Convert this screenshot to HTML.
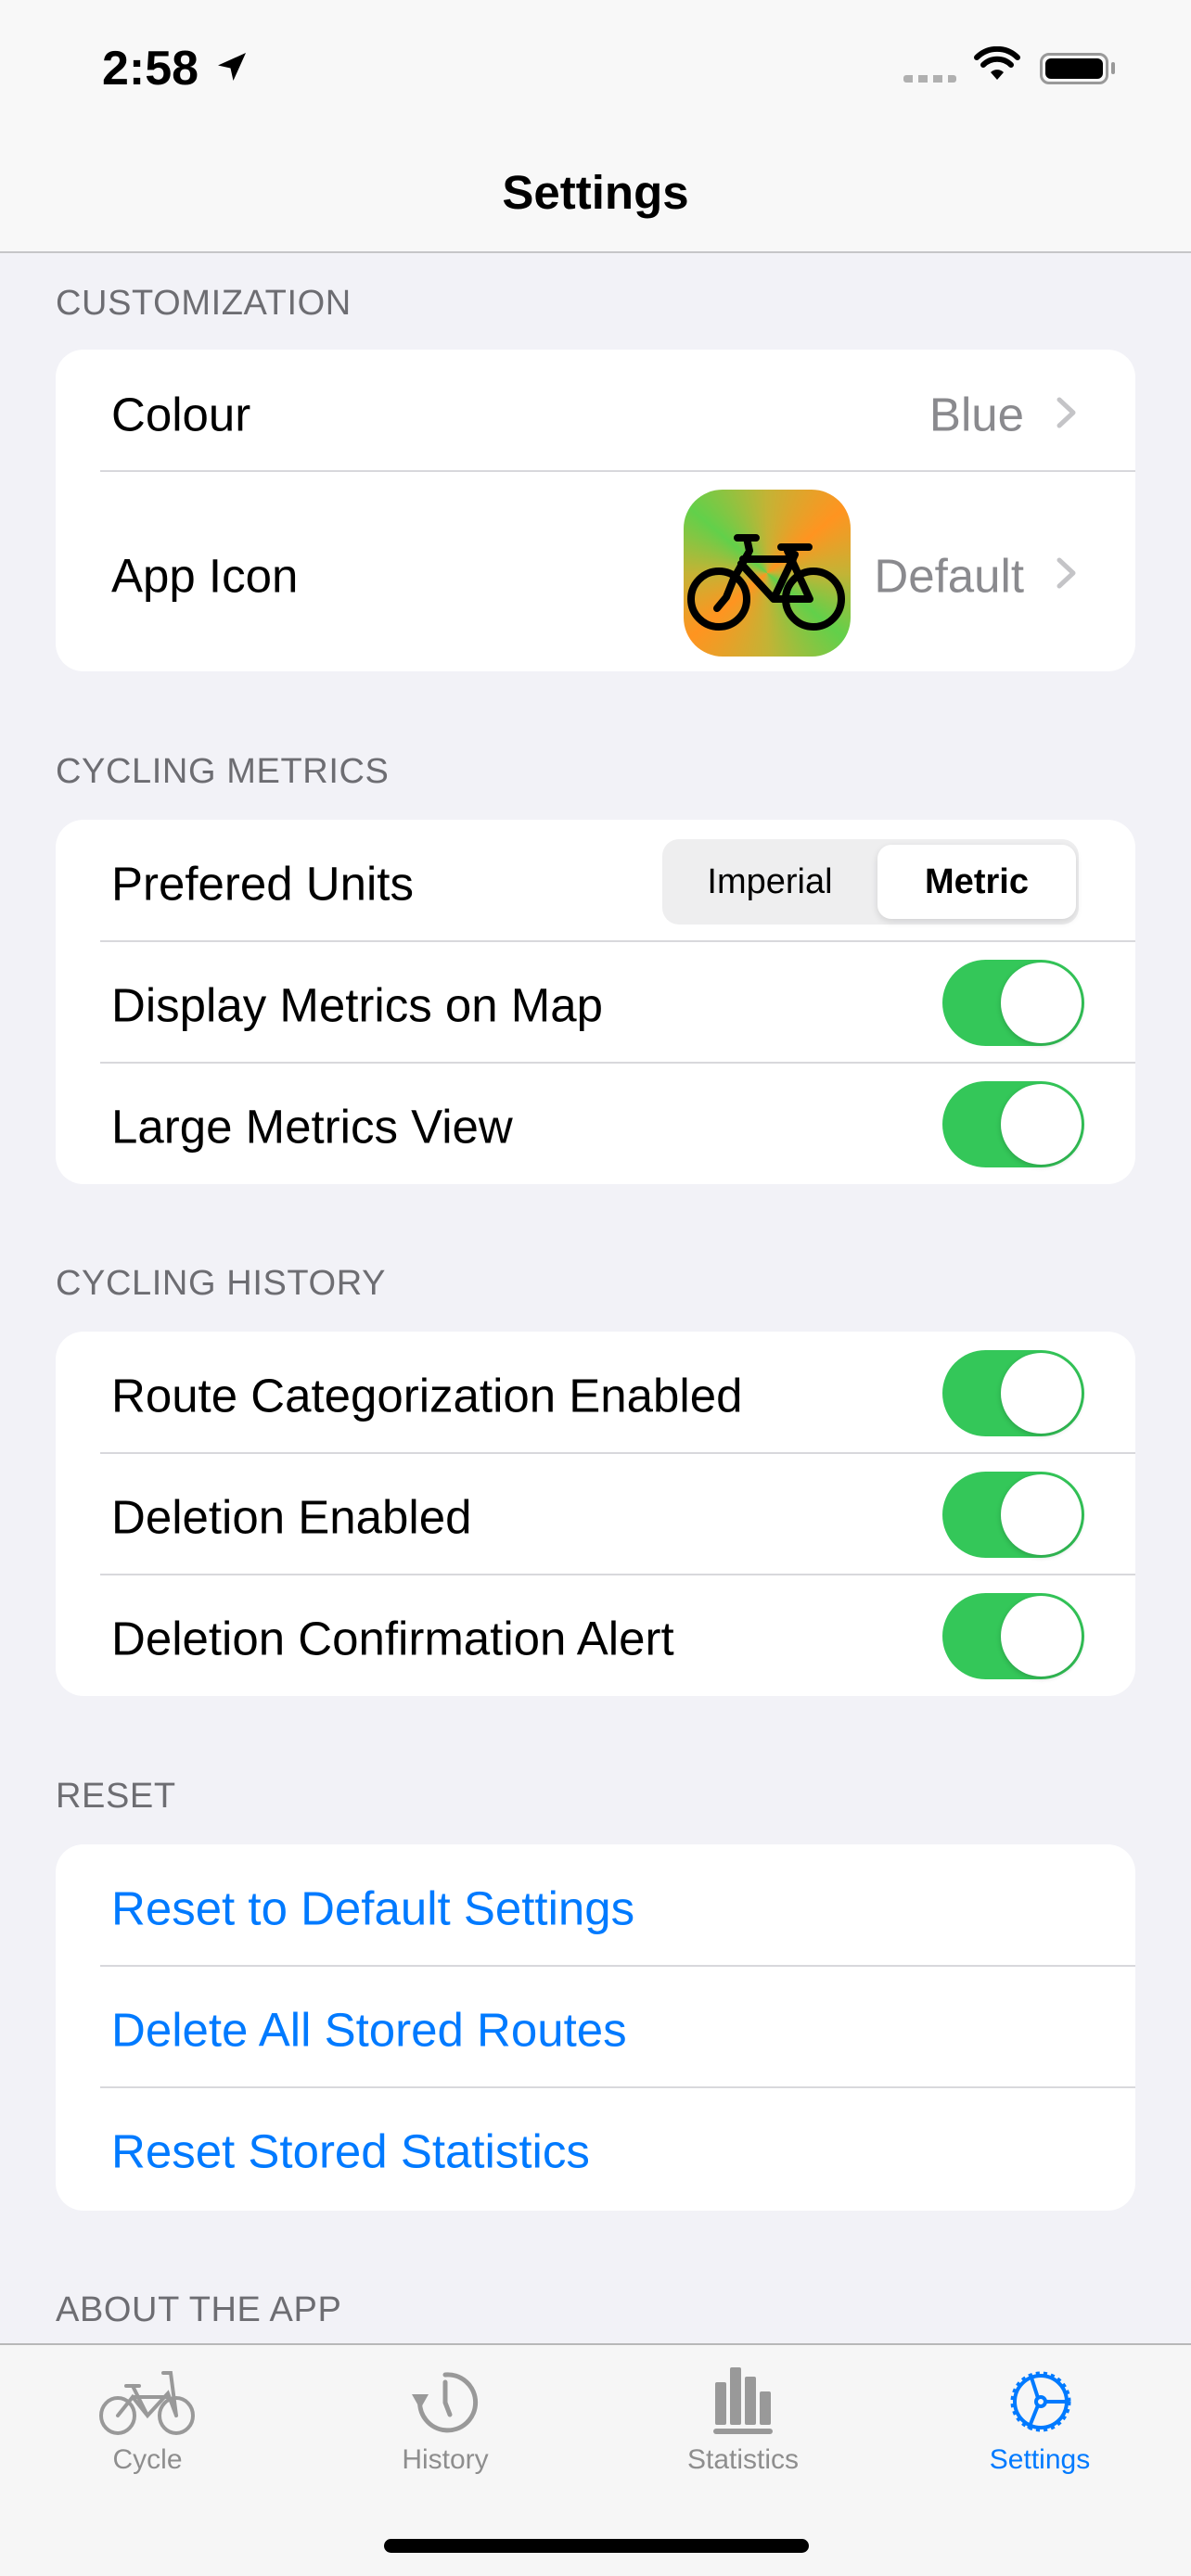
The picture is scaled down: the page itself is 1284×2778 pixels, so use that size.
<!DOCTYPE html>
<html><head><meta charset="utf-8"><style>
*{margin:0;padding:0;box-sizing:border-box}
body{width:1284px;height:2778px;background:#f2f2f7;font-family:"Liberation Sans",sans-serif;position:relative;overflow:hidden;color:#000}
.a{position:absolute}
.nav{left:0;top:0;width:1284px;height:273px;background:#f8f8f8;border-bottom:2px solid #c6c6c8}
.hdr{left:60px;font-size:38px;color:#6d6d72;letter-spacing:0.6px}
.card{left:60px;width:1164px;background:#fff;border-radius:30px}
.lbl{left:60px;font-size:51px;transform:translateY(-50%);margin-top:3px}
.sep{left:48px;right:0;height:2px;background:#d8d8dc}
.tog{width:153px;height:93px;border-radius:47px;background:#34c759;left:956px}
.tog::after{content:"";position:absolute;right:3px;top:3px;width:87px;height:87px;border-radius:50%;background:#fff;box-shadow:0 2px 6px rgba(0,0,0,.2)}
.blue{color:#007aff}
.tl{font-size:30px;color:#8e8e8e;transform:translateX(-50%);top:2636px}
</style></head><body>
<div class="a nav"></div>
<div class="a" style="left:110px;top:44px;font-size:52px;font-weight:bold">2:58</div>
<svg class="a" style="left:232px;top:54px" width="36" height="36" viewBox="0 0 24 24"><path d="M22 2 2 11l9 2 2 9z" fill="#000"/></svg>
<div class="a" style="left:974px;top:81px;width:57px;height:8px;background:repeating-linear-gradient(90deg,#b0b0b0 0 10px,transparent 10px 16px);border-radius:3px"></div>
<svg class="a" style="left:1050px;top:50px" width="50" height="38" viewBox="0 0 50 38"><path d="M25 36 18 28a10 10 0 0 1 14 0z" fill="#000"/><path d="M10 20a21 21 0 0 1 30 0" stroke="#000" stroke-width="6" fill="none" stroke-linecap="round"/><path d="M3 12a31 31 0 0 1 44 0" stroke="#000" stroke-width="6" fill="none" stroke-linecap="round"/></svg>
<div class="a" style="left:1121px;top:57px;width:74px;height:34px;border:3px solid #999;border-radius:10px;padding:3px"><div style="width:100%;height:100%;background:#000;border-radius:6px"></div></div>
<div class="a" style="left:1198px;top:67px;width:4px;height:13px;background:#999;border-radius:2px"></div>
<div class="a" style="left:0;width:1284px;text-align:center;top:178px;font-size:51px;font-weight:bold">Settings</div>

<div class="a hdr" style="top:306px">CUSTOMIZATION</div>
<div class="a card" style="top:377px;height:347px">
 <div class="a lbl" style="top:67px">Colour</div>
 <div class="a lbl" style="top:67px;left:auto;right:120px;color:#8a8a8e">Blue</div>
 <svg class="a" style="right:62px;top:50px" width="24" height="36" viewBox="0 0 24 36"><path d="M4 4l15 14L4 32" stroke="#c4c4c7" stroke-width="5" fill="none" stroke-linecap="round" stroke-linejoin="round"/></svg>
 <div class="a sep" style="top:130px"></div>
 <div class="a lbl" style="top:241px">App Icon</div>
 <div class="a" style="left:677px;top:151px;width:180px;height:180px;border-radius:42px;overflow:hidden;background:conic-gradient(from 0deg,#c4b335,#ff9420 50deg,#c4b335 90deg,#62d04a 130deg,#c4b335 180deg,#ff9420 230deg,#c4b335 270deg,#62d04a 310deg,#c4b335 360deg)">
  <svg style="position:absolute;left:0;top:0" width="180" height="180" viewBox="0 0 180 180"><g stroke="#000" stroke-width="8" fill="none" stroke-linecap="round" stroke-linejoin="round"><circle cx="38" cy="118" r="30"/><circle cx="140" cy="118" r="30"/><path d="M36 128 46 116 54 96 70 68M58 52h20M68 52l3 14M64 75H118M62 80 97 118H136L112 66M97 118 120 70M105 62h30M118 62l-5 12"/></g></svg>
 </div>
 <div class="a lbl" style="top:241px;left:auto;right:120px;color:#8a8a8e">Default</div>
 <svg class="a" style="right:62px;top:223px" width="24" height="36" viewBox="0 0 24 36"><path d="M4 4l15 14L4 32" stroke="#c4c4c7" stroke-width="5" fill="none" stroke-linecap="round" stroke-linejoin="round"/></svg>
</div>

<div class="a hdr" style="top:811px">CYCLING METRICS</div>
<div class="a card" style="top:884px;height:393px">
 <div class="a lbl" style="top:66px">Prefered Units</div>
 <div class="a" style="left:654px;top:21px;width:449px;height:92px;background:#eeeeef;border-radius:18px"></div>
 <div class="a" style="left:886px;top:27px;width:214px;height:80px;background:#fff;border-radius:15px;box-shadow:0 3px 8px rgba(0,0,0,.12)"></div>
 <div class="a" style="left:654px;width:232px;top:46px;text-align:center;font-size:38px">Imperial</div>
 <div class="a" style="left:886px;width:214px;top:46px;text-align:center;font-size:38px;font-weight:bold">Metric</div>
 <div class="a sep" style="top:130px"></div>
 <div class="a lbl" style="top:197px">Display Metrics on Map</div>
 <div class="a tog" style="top:151px"></div>
 <div class="a sep" style="top:261px"></div>
 <div class="a lbl" style="top:328px">Large Metrics View</div>
 <div class="a tog" style="top:282px"></div>
</div>

<div class="a hdr" style="top:1363px">CYCLING HISTORY</div>
<div class="a card" style="top:1436px;height:393px">
 <div class="a lbl" style="top:66px">Route Categorization Enabled</div>
 <div class="a tog" style="top:20px"></div>
 <div class="a sep" style="top:130px"></div>
 <div class="a lbl" style="top:197px">Deletion Enabled</div>
 <div class="a tog" style="top:151px"></div>
 <div class="a sep" style="top:261px"></div>
 <div class="a lbl" style="top:328px">Deletion Confirmation Alert</div>
 <div class="a tog" style="top:282px"></div>
</div>

<div class="a hdr" style="top:1916px">RESET</div>
<div class="a card" style="top:1989px;height:395px">
 <div class="a lbl blue" style="top:66px">Reset to Default Settings</div>
 <div class="a sep" style="top:130px"></div>
 <div class="a lbl blue" style="top:197px">Delete All Stored Routes</div>
 <div class="a sep" style="top:261px"></div>
 <div class="a lbl blue" style="top:328px">Reset Stored Statistics</div>
</div>

<div class="a hdr" style="top:2470px">ABOUT THE APP</div>

<div class="a" style="left:0;top:2527px;width:1284px;height:251px;background:#f6f6f6;border-top:2px solid #b8b8b8"></div>
<svg class="a" style="left:106px;top:2555px" width="106" height="72" viewBox="0 0 106 72"><g stroke="#999" stroke-width="4" fill="none" stroke-linecap="round"><ellipse cx="21" cy="50" rx="18" ry="19"/><ellipse cx="84" cy="50" rx="18" ry="19"/><path d="M21 50 37 30 53 50 75 26 84 50M37 30H75M70 4h8l6 46M30 18h14M37 18l16 32"/></g></svg>
<div class="a tl" style="left:159px">Cycle</div>
<svg class="a" style="left:442px;top:2553px" width="76" height="76" viewBox="0 0 76 76"><g stroke="#999" stroke-width="5" fill="none" stroke-linecap="round"><path d="M38 8A30 30 0 1 1 11 33"/><path d="M38 16v22l5 13"/></g><path d="M2 29h18l-9 16z" fill="#999"/></svg>
<div class="a tl" style="left:480px">History</div>
<svg class="a" style="left:766px;top:2553px" width="70" height="72" viewBox="0 0 70 72"><g fill="#999"><rect x="5" y="16" width="12" height="46" rx="2"/><rect x="21" y="0" width="12" height="62" rx="2"/><rect x="37" y="10" width="12" height="52" rx="2"/><rect x="53" y="26" width="12" height="36" rx="2"/><rect x="3" y="66" width="64" height="6" rx="3"/></g></svg>
<div class="a tl" style="left:801px">Statistics</div>
<svg class="a" style="left:1085px;top:2553px" width="74" height="74" viewBox="0 0 74 74"><circle cx="37" cy="37" r="30" stroke="#007aff" stroke-width="5" fill="none" stroke-dasharray="4 4"/><circle cx="37" cy="37" r="28" stroke="#007aff" stroke-width="4" fill="none"/><g stroke="#007aff" stroke-width="4" fill="none"><circle cx="37" cy="37" r="5"/><path d="M42 37h26M34 33 26 8M34 41 24 66"/></g></svg>
<div class="a tl" style="left:1121px;color:#007aff">Settings</div>
<div class="a" style="left:414px;top:2738px;width:458px;height:15px;background:#000;border-radius:8px"></div>
</body></html>
